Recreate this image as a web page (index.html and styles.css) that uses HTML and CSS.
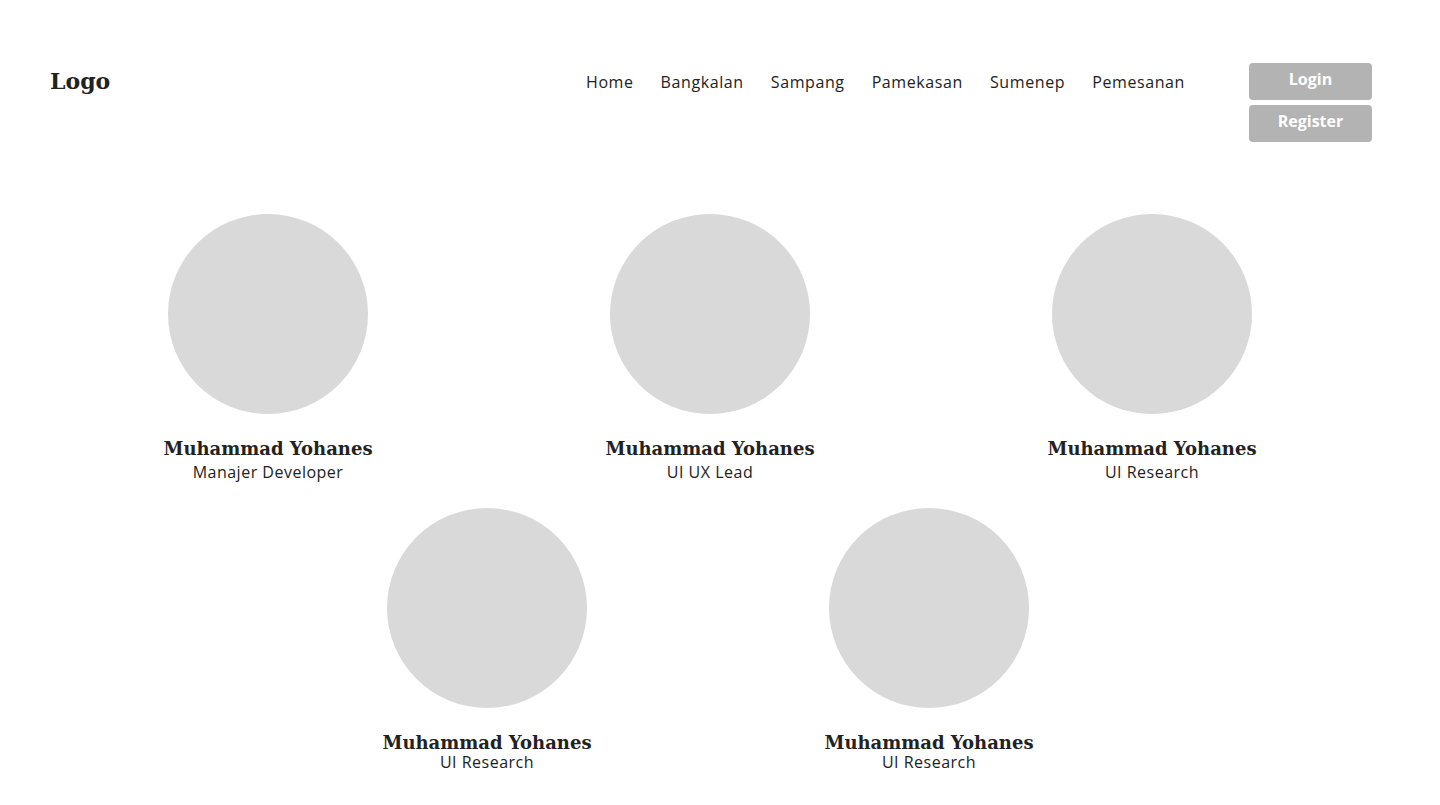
FILE: index.html
```html
<!DOCTYPE html>
<html lang="id">
<head>
<meta charset="utf-8">
<title>Tim</title>
<link rel="stylesheet" href="styles.css">
</head>
<body>
<header class="header">
  <div class="logo">Logo</div>
  <nav class="nav">
    <a href="#" class="nav-link">Home</a>
    <a href="#" class="nav-link">Bangkalan</a>
    <a href="#" class="nav-link">Sampang</a>
    <a href="#" class="nav-link">Pamekasan</a>
    <a href="#" class="nav-link">Sumenep</a>
    <a href="#" class="nav-link">Pemesanan</a>
  </nav>
  <div class="auth">
    <button class="btn">Login</button>
    <button class="btn">Register</button>
  </div>
</header>
<main class="team">
  <div class="member">
    <div class="avatar"></div>
    <div class="name">Muhammad Yohanes</div>
    <div class="role">Manajer Developer</div>
  </div>
  <div class="member">
    <div class="avatar"></div>
    <div class="name">Muhammad Yohanes</div>
    <div class="role">UI UX Lead</div>
  </div>
  <div class="member">
    <div class="avatar"></div>
    <div class="name">Muhammad Yohanes</div>
    <div class="role">UI Research</div>
  </div>
  <div class="member member-tight">
    <div class="avatar"></div>
    <div class="name">Muhammad Yohanes</div>
    <div class="role">UI Research</div>
  </div>
  <div class="member member-tight">
    <div class="avatar"></div>
    <div class="name">Muhammad Yohanes</div>
    <div class="role">UI Research</div>
  </div>
</main>
</body>
</html>
```
FILE: styles.css
```css
* { box-sizing: border-box; }
body {
  margin: 0;
  background: #fff;
  color: #222;
  font-family: "Open Sans", "Noto Sans", sans-serif;
}
.header {
  display: flex;
  align-items: flex-start;
  padding: 63px 68px 0 50px;
}
.logo {
  font-family: "DejaVu Serif", "Liberation Serif", serif;
  font-weight: 700;
  font-size: 22px;
  line-height: 37px;
  color: #222;
  flex: 1;
}
.nav {
  display: flex;
  gap: 27px;
  margin-right: 64px;
}
.nav-link {
  font-size: 16px;
  line-height: 38px;
  letter-spacing: 0.6px;
  color: #222;
  text-decoration: none;
}
.auth {
  display: flex;
  flex-direction: column;
  gap: 5px;
}
.btn {
  width: 123px;
  height: 37px;
  border: none;
  border-radius: 4px;
  background: #b3b3b3;
  color: #fff;
  font-family: "Open Sans", sans-serif;
  font-weight: 700;
  font-size: 16px;
  line-height: 33px;
  padding: 0 0 4px;
}
.team {
  width: 1326px;
  margin: 72px 0 0 47px;
  display: flex;
  flex-wrap: wrap;
  justify-content: center;
  row-gap: 26px;
}
.member {
  width: 442px;
  display: flex;
  flex-direction: column;
  align-items: center;
}
.avatar {
  width: 200px;
  height: 200px;
  border-radius: 50%;
  background: #d9d9d9;
}
.name {
  margin-top: 22px;
  font-family: "DejaVu Serif", "Liberation Serif", serif;
  font-weight: 700;
  font-size: 18px;
  line-height: 26px;
  color: #222;
}
.role {
  font-size: 16px;
  line-height: 20px;
  letter-spacing: 0.5px;
  color: #222;
}
.member-tight {
  margin-left: -2px;
  margin-right: 2px;
}
.member-tight .role {
  margin-top: -4px;
}
```
